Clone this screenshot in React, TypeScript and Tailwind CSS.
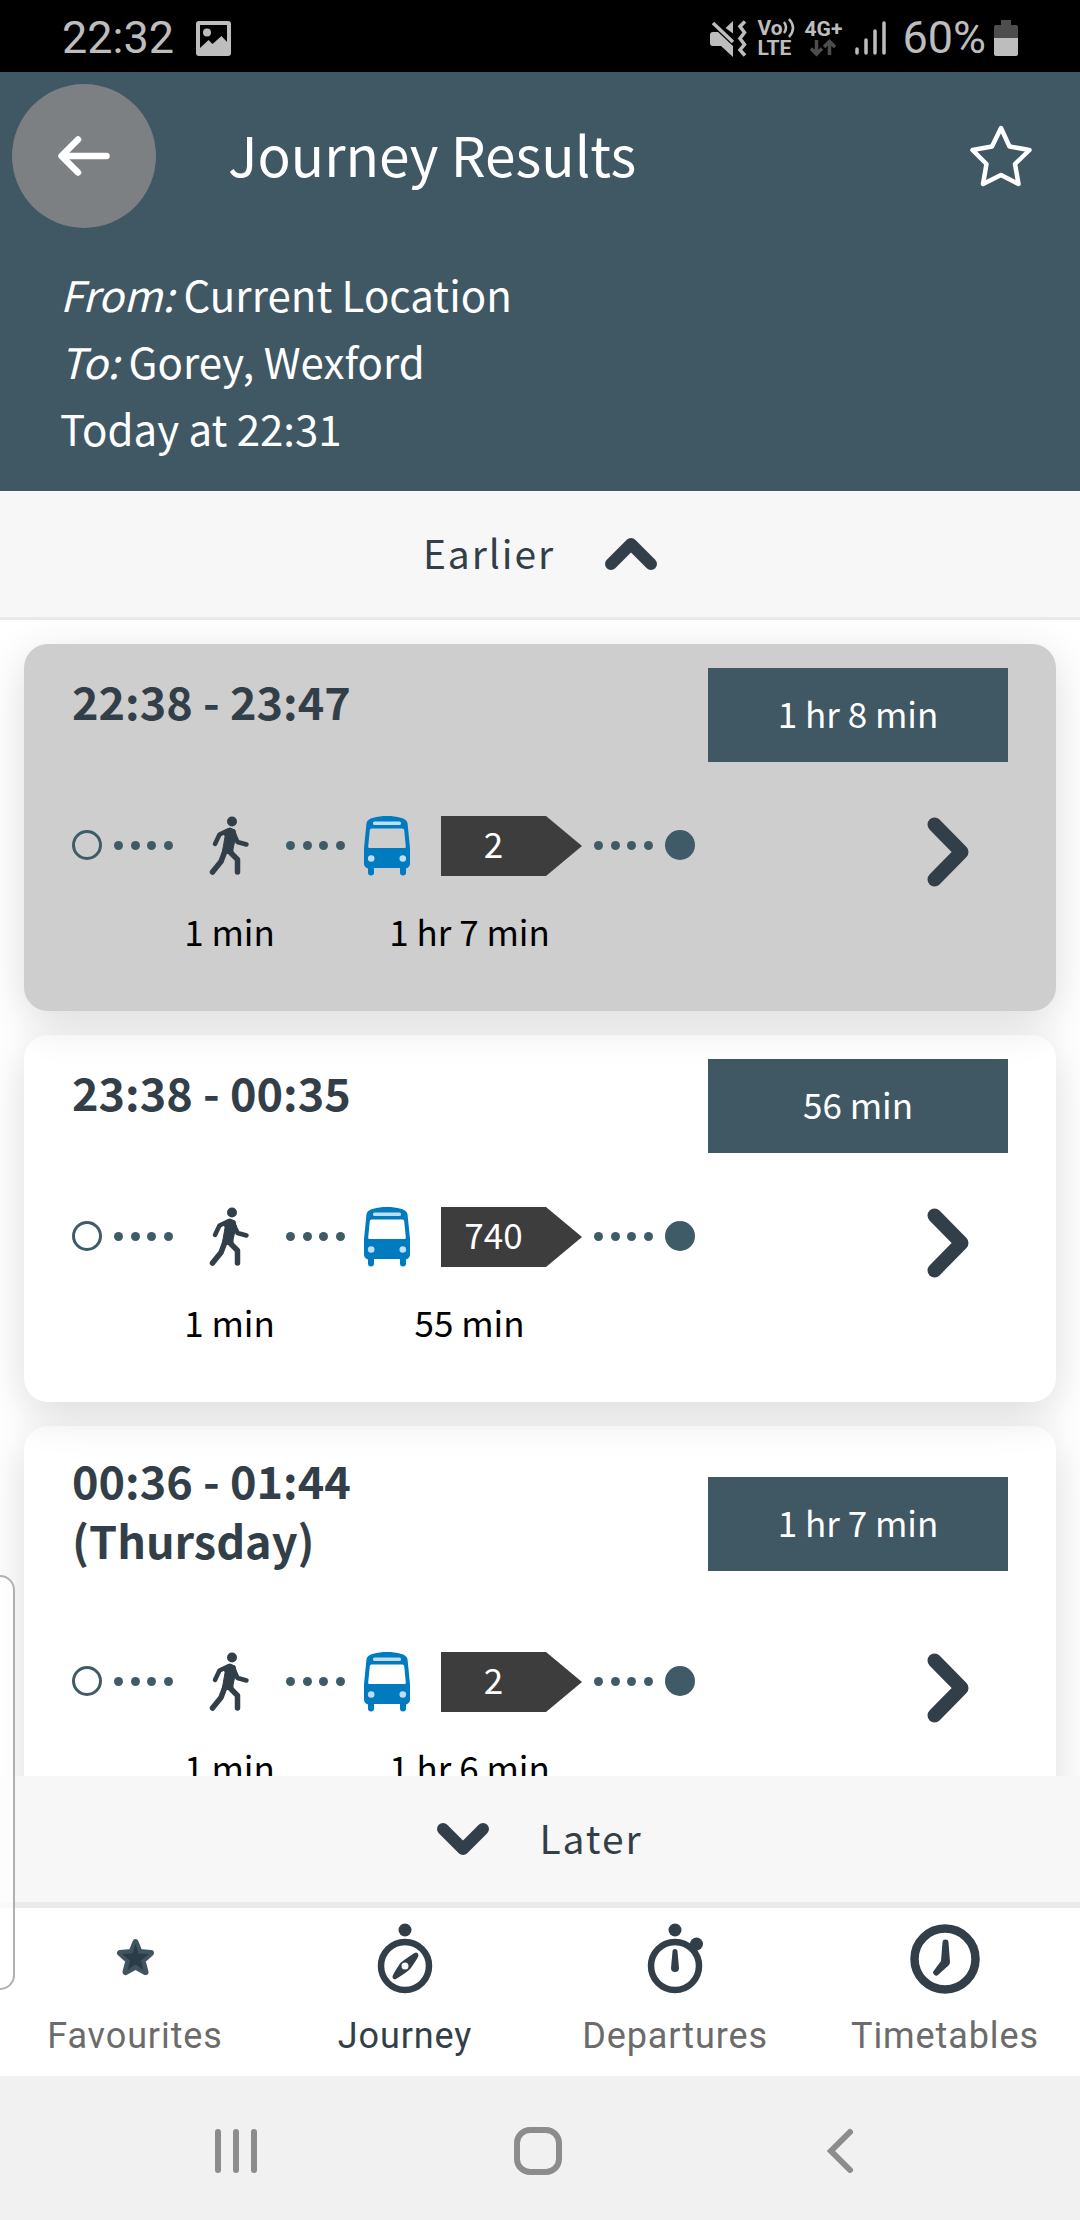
import React from "react";

type Journey = {
  time: string;
  day?: string;
  total: string;
  walk: string;
  route: string;
  ride: string;
  tone: string;
};

const journeys: Journey[] = [
  { time: "22:38 - 23:47", total: "1 hr 8 min", walk: "1 min", route: "2", ride: "1 hr 7 min", tone: "z-30 bg-[#cecece]" },
  { time: "23:38 - 00:35", total: "56 min", walk: "1 min", route: "740", ride: "55 min", tone: "z-20 bg-white" },
  { time: "00:36 - 01:44", day: "(Thursday)", total: "1 hr 7 min", walk: "1 min", route: "2", ride: "1 hr 6 min", tone: "z-10 bg-white" },
];

function StatusBar() {
  return (
    <div className="flex h-[72px] shrink-0 items-center justify-between bg-black px-[62px] pt-1 font-[Roboto,sans-serif] text-[#bdbdbd]">
      <div className="flex items-center gap-[22px]">
        <span className="text-[45px] leading-[68px]">22:32</span>
        <svg className="h-[35px] w-[35px]" viewBox="0 0 35 35" aria-hidden="true">
          <path
            fill="currentColor"
            fillRule="evenodd"
            d="M3 0h29a3 3 0 0 1 3 3v29a3 3 0 0 1-3 3H3a3 3 0 0 1-3-3V3a3 3 0 0 1 3-3ZM4 4v23l8.500-8 4 4L25.500 15 31 21V4Z"
          />
          <circle cx="11" cy="11.500" r="4" fill="currentColor" />
        </svg>
      </div>
      <div className="flex items-center">
        <svg className="h-[37px] w-[37px]" viewBox="0 0 37 37" aria-hidden="true">
          <path fill="currentColor" d="M3 12h5L23 26v11L11 26H3a3 3 0 0 1-3-3v-8a3 3 0 0 1 3-3ZM23 1v12.500L15.500 8Z" />
          <path d="M3 3l20 19" stroke="currentColor" strokeWidth="3.500" />
          <path d="M35 1.500l-5 5 4.500 6-4.500 6 4.500 6-4.500 5.500 5 5.500" fill="none" stroke="currentColor" strokeWidth="3.500" />
        </svg>
        <div className="ml-2.5 flex w-[38px] flex-col text-[21px] leading-5 font-bold">
          <span className="flex items-center">
            Vo
            <svg className="h-5 w-3" viewBox="0 0 12 20" fill="none" stroke="currentColor" strokeWidth="2.500" aria-hidden="true">
              <path d="M1 4q4 5.500 0 11M6 1q8 9 0 18" />
            </svg>
          </span>
          <span>LTE</span>
        </div>
        <div className="ml-2.5 flex w-9 flex-col items-center text-[21px] leading-5 font-bold">
          <span>4G+</span>
          <svg className="h-[18px] w-[26px] text-[#4d4d4d]" viewBox="0 0 26 18" fill="none" stroke="currentColor" strokeWidth="3.500" aria-hidden="true">
            <path d="M6.500 1v13M1 9.500l5.500 5.500 5.500-5.500M19.500 16V3M14 8l5.500-5.500L25 8" />
          </svg>
        </div>
        <svg className="ml-3.5 h-[34px] w-[31px]" viewBox="0 0 31 34" stroke="currentColor" strokeWidth="3.500" strokeLinecap="round" aria-hidden="true">
          <path d="M2 28v4M11 19v13M20 10v22M29 2v30" />
        </svg>
        <span className="ml-4 text-[45px] leading-[68px]">60%</span>
        <svg className="ml-2 h-9 w-6" viewBox="0 0 24 36" aria-hidden="true">
          <path fill="#4d4d4d" d="M7 0h10v5h5a2 2 0 0 1 2 2v11H0V7a2 2 0 0 1 2-2h5Z" />
          <path fill="currentColor" d="M0 18h24v16a2 2 0 0 1-2 2H2a2 2 0 0 1-2-2Z" />
        </svg>
      </div>
    </div>
  );
}

function Header() {
  return (
    <header className="h-[419px] shrink-0 bg-[#405764] text-white">
      <div className="flex items-center pt-3 pr-12 pl-3">
        <button type="button" aria-label="Back" className="flex size-36 items-center justify-center rounded-full bg-[#7c8083]">
          <svg className="h-10 w-[52px]" viewBox="0 0 52 40" fill="none" stroke="currentColor" strokeWidth="6.500" strokeLinecap="round" strokeLinejoin="round" aria-hidden="true">
            <path d="M20 3.500L3.500 20 20 36.500M4 20h44.500" />
          </svg>
        </button>
        <h1 className="ml-[72px] flex-1 pb-1.5 text-[55px] leading-[84px]">Journey Results</h1>
        <button type="button" aria-label="Add to favourites">
          <svg className="size-[62px]" viewBox="0 0 62 62" fill="none" stroke="currentColor" strokeWidth="4.500" strokeLinejoin="round" aria-hidden="true">
            <path d="M31 3L39.500 21.500 59.500 25 45 39 48.500 59 31 50 13 59 16.500 39 2.500 25 22 21.500Z" />
          </svg>
        </button>
      </div>
      <div className="px-[60px] pt-8 text-[42px] leading-[67px]">
        <p><em>From:</em> Current Location</p>
        <p><em>To:</em> Gorey, Wexford</p>
        <p>Today at 22:31</p>
      </div>
    </header>
  );
}

function Dots() {
  return (
    <div className="flex h-[58px] w-[59px] items-center justify-between">
      <i className="size-[9px] rounded-full bg-[#405b68]" />
      <i className="size-[9px] rounded-full bg-[#405b68]" />
      <i className="size-[9px] rounded-full bg-[#405b68]" />
      <i className="size-[9px] rounded-full bg-[#405b68]" />
    </div>
  );
}

function WalkIcon() {
  return (
    <svg className="size-[60px] text-[#333f48]" viewBox="0 0 60 60" fill="none" stroke="currentColor" strokeLinecap="round" strokeLinejoin="round" aria-hidden="true">
      <circle cx="32" cy="5.500" r="5" fill="currentColor" stroke="none" />
      <path d="M29 14L19.500 18.500 15 28" strokeWidth="4.500" />
      <path d="M33 16L37.500 26 46.500 28.500" strokeWidth="4.500" />
      <path d="M24 15l6-3 5 2 1 5-3 14 0 4-11 1 3-17Z" fill="currentColor" strokeWidth="1" />
      <path d="M25 35L21 45.500 12.500 56" strokeWidth="5.500" />
      <path d="M29 35L37.500 43.500V56" strokeWidth="5.500" />
    </svg>
  );
}

function BusIcon() {
  return (
    <svg className="size-[60px]" viewBox="0 0 60 60" aria-hidden="true">
      <path
        fill="#007bc0"
        fillRule="evenodd"
        d="M30 0C40 0 49.500 2 50.500 7L53 32V47.500Q53 51 49 52.500V56.500a3 3 0 0 1-6 0V52H17v4.500a3 3 0 0 1-6 0V52.500Q7 51 7 47.500V32L9.500 7C10.500 2 20 0 30 0ZM14.500 12.500Q13 12.500 12.800 14L11.200 30.500Q11 32 12.500 32H47.500Q49 32 48.800 30.500L47.200 14Q47 12.500 45.500 12.500Z"
      />
      <g fill="#fff" fillOpacity="0.750">
        <rect x="16" y="5.500" width="28" height="3.500" rx="1.500" />
        <circle cx="14.200" cy="42.500" r="3.300" />
        <circle cx="45.800" cy="42.500" r="3.300" />
      </g>
    </svg>
  );
}

function JourneyCard({ j }: { j: Journey }) {
  return (
    <li className={"relative rounded-3xl px-12 pt-6 pb-[53px] shadow-[0_12px_44px_rgba(0,0,0,0.14)] " + j.tone}>
      <div className="flex items-center justify-between">
        <h2 className="pb-7 text-[45px] leading-[60px] font-bold text-[#333f48]">
          {j.time}
          {j.day && <span className="block">{j.day}</span>}
        </h2>
        <p className="flex h-[94px] w-[300px] items-center justify-center bg-[#405764] pb-1 text-[35px] leading-[54px] text-white">{j.total}</p>
      </div>
      <div className="mt-[54px] flex items-start justify-between">
        <div className="flex items-start">
          <div className="flex h-[58px] items-center">
            <span className="size-[30px] rounded-full border-[3px] border-[#405b68]" />
          </div>
          <div className="ml-3"><Dots /></div>
          <div className="flex w-[113px] flex-col items-center gap-7 text-[35px] leading-[54px] text-black">
            <WalkIcon />
            <span>{j.walk}</span>
          </div>
          <Dots />
          <div className="mx-3 flex flex-col items-center gap-7 text-[35px] leading-[54px] text-black">
            <div className="flex gap-6">
              <BusIcon />
              <span className="flex h-[60px] w-[141px] items-center justify-center bg-[#3d3d3d] pr-9 pb-1.5 text-white [clip-path:polygon(0_0,105px_0,100%_50%,105px_100%,0_100%)]">
                {j.route}
              </span>
            </div>
            <span>{j.ride}</span>
          </div>
          <Dots />
          <div className="ml-3 flex h-[58px] items-center">
            <span className="size-[30px] rounded-full bg-[#405b68]" />
          </div>
        </div>
        <button type="button" aria-label={"View journey " + j.time} className="mr-[39px] text-[#333f48]">
          <svg className="h-[71px] w-[42px]" viewBox="0 0 42 71" fill="none" stroke="currentColor" strokeWidth="14" strokeLinecap="round" strokeLinejoin="round" aria-hidden="true">
            <path d="M7.500 8.500L34.500 36 7.500 63.500" />
          </svg>
        </button>
      </div>
    </li>
  );
}

function StarTab() {
  return (
    <svg className="size-[72px]" viewBox="0 0 72 72" aria-hidden="true">
      <path
        d="M36.500 20L40.500 30 52 31 43.500 38.500 46.500 50 36.500 44.500 26.500 50 29.500 38.500 21 31 32.500 30Z"
        fill="#2a3c48"
        stroke="#42555f"
        strokeWidth="6"
        strokeLinejoin="round"
      />
      <path d="M36.500 22L39.500 31.500 50 32 42 38.500 44.500 48 36.500 42.500 28.500 48 31 38.500 23 32 33.500 31.500Z" fill="#2a3c48" />
    </svg>
  );
}

function CompassTab() {
  return (
    <svg className="size-[72px]" viewBox="0 0 72 72" aria-hidden="true">
      <circle cx="36" cy="8" r="6.500" fill="currentColor" />
      <circle cx="36" cy="44" r="24" fill="none" stroke="currentColor" strokeWidth="6.500" />
      <path
        fill="currentColor"
        fillRule="evenodd"
        d="M45.500 31Q49 29.500 49.500 33.500 49 36 41.500 46.500 40 49 27 57 23.500 58 23.500 54.500 24 52 31 41.500 32.500 39.500 45.500 31ZM36 40.500a3.500 3.500 0 1 0 0 7 3.500 3.500 0 0 0 0-7Z"
      />
    </svg>
  );
}

function StopwatchTab() {
  return (
    <svg className="size-[72px]" viewBox="0 0 72 72" aria-hidden="true">
      <circle cx="36" cy="8" r="6.500" fill="currentColor" />
      <circle cx="57.500" cy="22" r="6.500" fill="currentColor" />
      <path d="M52 29l5-6" stroke="currentColor" strokeWidth="9" />
      <circle cx="36" cy="44" r="24" fill="none" stroke="currentColor" strokeWidth="6.500" />
      <path fill="currentColor" d="M33.500 29.500a2.500 2.500 0 0 1 5 0L40 46a4 4 0 0 1-8 0Z" />
    </svg>
  );
}

function ClockTab() {
  return (
    <svg className="size-[72px]" viewBox="0 0 72 72" aria-hidden="true">
      <circle cx="36" cy="37" r="30.500" fill="none" stroke="currentColor" strokeWidth="8.500" />
      <path fill="currentColor" d="M33.500 20.500a3 3 0 0 1 6 0L41 40q0 2-1.500 3.500L29.500 52.500a3 3 0 0 1-4.500-4L32 39Z" />
    </svg>
  );
}

const tabs = [
  { label: "Favourites", icon: <StarTab />, tone: "text-[#6b6b6b]" },
  { label: "Journey", icon: <CompassTab />, tone: "text-[#333f48]" },
  { label: "Departures", icon: <StopwatchTab />, tone: "text-[#6b6b6b]" },
  { label: "Timetables", icon: <ClockTab />, tone: "text-[#6b6b6b]" },
];

export default function App() {
  return (
    <div className="relative flex h-screen flex-col overflow-hidden bg-white font-['Noto_Sans_CJK_SC',sans-serif]">
      <StatusBar />
      <Header />
      <button type="button" className="z-40 flex h-[129px] shrink-0 items-center justify-center gap-[50px] border-b-[3px] border-[#e9e9e9] bg-[#f7f7f7] text-[39px] leading-[56px] tracking-wider text-[#333f48]">
        <span className="pb-1">Earlier</span>
        <svg className="h-8 w-[52px]" viewBox="0 0 52 32" fill="none" stroke="currentColor" strokeWidth="12" strokeLinecap="round" strokeLinejoin="round" aria-hidden="true">
          <path d="M6 26L26 6 46 26" />
        </svg>
      </button>
      <main className="min-h-0 flex-1 overflow-x-hidden overflow-y-auto [scrollbar-width:none]">
        <ul className="flex flex-col gap-6 p-6">
          {journeys.map((j) => (
            <JourneyCard key={j.time} j={j} />
          ))}
        </ul>
      </main>
      <button type="button" className="z-40 flex h-[132px] shrink-0 items-center justify-center gap-[50px] border-b-[6px] border-[#e9e9e9] bg-[#f7f7f7] text-[39px] leading-[56px] tracking-wider text-[#333f48]">
        <svg className="h-8 w-[52px]" viewBox="0 0 52 32" fill="none" stroke="currentColor" strokeWidth="12" strokeLinecap="round" strokeLinejoin="round" aria-hidden="true">
          <path d="M6 6L26 26 46 6" />
        </svg>
        <span className="pb-1">Later</span>
      </button>
      <nav className="grid h-[168px] shrink-0 grid-cols-4 bg-white font-[Roboto,sans-serif]">
        {tabs.map((t) => (
          <a key={t.label} href="#" className={"flex flex-col items-center pt-3.5 text-4xl leading-[42px] " + t.tone}>
            <span className="text-[#333f48]">{t.icon}</span>
            <span className="mt-[21px] tracking-wide">{t.label}</span>
          </a>
        ))}
      </nav>
      <div className="grid h-36 shrink-0 grid-cols-3 place-items-center bg-[#f1f1f1] pt-1.5 pr-[89px] pl-[85px] text-[#8c8c8c]">
        <button type="button" aria-label="Recent apps">
          <svg className="size-12" viewBox="0 0 48 48" stroke="currentColor" strokeWidth="6" strokeLinecap="round" aria-hidden="true">
            <path d="M6 5v38M24 5v38M42 5v38" />
          </svg>
        </button>
        <button type="button" aria-label="Home">
          <svg className="size-12" viewBox="0 0 48 48" fill="none" stroke="currentColor" strokeWidth="6" aria-hidden="true">
            <rect x="3" y="3" width="42" height="42" rx="13" />
          </svg>
        </button>
        <button type="button" aria-label="System back">
          <svg className="size-12" viewBox="0 0 48 48" fill="none" stroke="currentColor" strokeWidth="6" strokeLinecap="round" aria-hidden="true">
            <path d="M34 5L15 24 34 43" />
          </svg>
        </button>
      </div>
      <div className="absolute bottom-[230px] left-0 z-50 h-[415px] w-[15px] rounded-r-[20px] border-2 border-l-0 border-[#b0b0b0] bg-white/75" />
    </div>
  );
}
